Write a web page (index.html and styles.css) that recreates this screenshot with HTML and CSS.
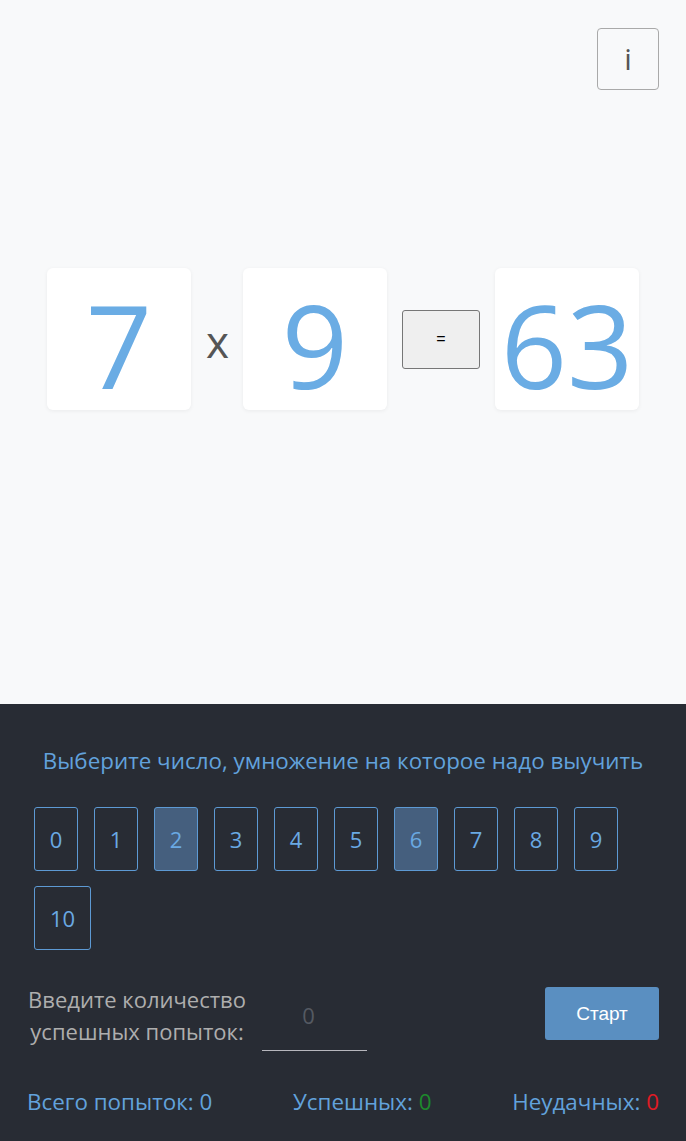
FILE: index.html
```html
<!DOCTYPE html>
<html lang="ru">
<head>
<meta charset="utf-8">
<title>Таблица умножения</title>
<link rel="stylesheet" href="styles.css">
</head>
<body>
<main class="app">
  <section class="game">
    <div class="topbar">
      <button class="info-btn" type="button">i</button>
    </div>
    <div class="equation">
      <div class="card">7</div>
      <span class="op">x</span>
      <div class="card">9</div>
      <button class="eq-btn" type="button">=</button>
      <div class="card">63</div>
    </div>
  </section>
  <section class="panel">
    <h2 class="panel-title">Выберите число, умножение на которое надо выучить</h2>
    <div class="numbers">
      <button class="num" type="button">0</button>
      <button class="num" type="button">1</button>
      <button class="num selected" type="button">2</button>
      <button class="num" type="button">3</button>
      <button class="num" type="button">4</button>
      <button class="num" type="button">5</button>
      <button class="num selected" type="button">6</button>
      <button class="num" type="button">7</button>
      <button class="num" type="button">8</button>
      <button class="num" type="button">9</button>
      <button class="num wide" type="button">10</button>
    </div>
    <div class="controls">
      <label class="attempts-label" for="attempts">Введите количество<br>успешных попыток:</label>
      <input class="attempts-input" id="attempts" type="text" placeholder="0">
      <button class="start-btn" type="button">Старт</button>
    </div>
    <div class="stats">
      <span class="stat">Всего попыток: <span class="val">0</span></span>
      <span class="stat">Успешных: <span class="val ok">0</span></span>
      <span class="stat">Неудачных: <span class="val bad">0</span></span>
    </div>
  </section>
</main>
</body>
</html>
```

FILE: styles.css
```css
* { box-sizing: border-box; }
html, body {
  margin: 0;
  padding: 0;
}
body {
  font-family: "Open Sans", "Noto Sans", "DejaVu Sans", sans-serif;
  background: #282c34;
}
.app {
  display: flex;
  flex-direction: column;
  min-height: 1141px;
}
.game {
  background: #f8f9fa;
  height: 704px;
  display: flex;
  flex-direction: column;
}
.topbar {
  display: flex;
  justify-content: flex-end;
  padding: 28px 27px 0 0;
}
.info-btn {
  width: 62px;
  height: 62px;
  border: 1px solid #a9a9a9;
  border-radius: 4px;
  background: #f8f9fa;
  color: #555;
  font-family: "Open Sans", sans-serif;
  font-size: 30px;
  font-weight: 400;
  padding: 0;
  line-height: 1;
}
.equation {
  display: flex;
  align-items: center;
  justify-content: center;
  gap: 15px;
  margin-top: 178px;
}
.card {
  width: 144px;
  height: 142px;
  background: #fff;
  border-radius: 6px;
  box-shadow: 0 1px 4px rgba(0,0,0,0.06);
  display: flex;
  align-items: center;
  justify-content: center;
  color: #6aace4;
  font-size: 116px;
  line-height: 1;
  padding-top: 10px;
}
.op {
  width: 22px;
  text-align: center;
  color: #555;
  font-size: 44px;
  line-height: 1;
  margin-top: 4px;
}
.eq-btn {
  width: 78px;
  height: 59px;
  background: #efefef;
  border: 1px solid #767676;
  border-radius: 3px;
  font-family: "Liberation Sans", Arial, sans-serif;
  font-size: 16px;
  color: #000;
  padding: 0;
}
.panel {
  flex: 1;
  background: #282c34;
  padding: 42px 0 0 0;
}
.panel-title {
  margin: 0;
  text-align: center;
  font-weight: 400;
  font-size: 22.4px;
  color: #62a2dc;
  line-height: 30px;
}
.numbers {
  display: flex;
  flex-wrap: wrap;
  gap: 15px 16px;
  width: 652px;
  padding-left: 34px;
  margin-top: 31px;
}
.num {
  width: 44px;
  height: 64px;
  background: transparent;
  border: 1px solid #5d9ad4;
  border-radius: 3px;
  color: #6aa9e3;
  font-family: "Open Sans", sans-serif;
  font-size: 22px;
  padding: 0;
}
.num.wide { width: 57px; }
.num.selected { background: #455f7e; }
.controls {
  display: flex;
  align-items: flex-start;
  padding: 33px 27px 0 27px;
}
.attempts-label {
  flex: 0 0 220px;
  white-space: nowrap;
  text-align: center;
  color: #aeaeae;
  font-size: 22px;
  line-height: 32px;
}
.attempts-input {
  flex: 0 0 105px;
  width: 105px;
  height: 68px;
  margin-left: 15px;
  background: transparent;
  border: none;
  border-bottom: 1px solid #b7b7bd;
  text-align: center;
  font-family: "Open Sans", sans-serif;
  font-size: 22px;
  color: #ddd;
  padding: 16px 12px 20px 0;
  outline: none;
}
.attempts-input::placeholder { color: #555a62; }
.start-btn {
  flex: 0 0 114px;
  margin-left: auto;
  margin-top: 4px;
  width: 114px;
  height: 53px;
  background: #5a8fc1;
  border: none;
  border-radius: 3px;
  color: #fff;
  font-family: "Liberation Sans", Arial, sans-serif;
  font-size: 19px;
}
.stats {
  display: flex;
  justify-content: space-between;
  padding: 36px 27px 0 27px;
  font-size: 22.4px;
  line-height: 30px;
  color: #62a2dc;
}
.val.ok { color: #1d8a2c; }
.val.bad { color: #e01b24; }
```
